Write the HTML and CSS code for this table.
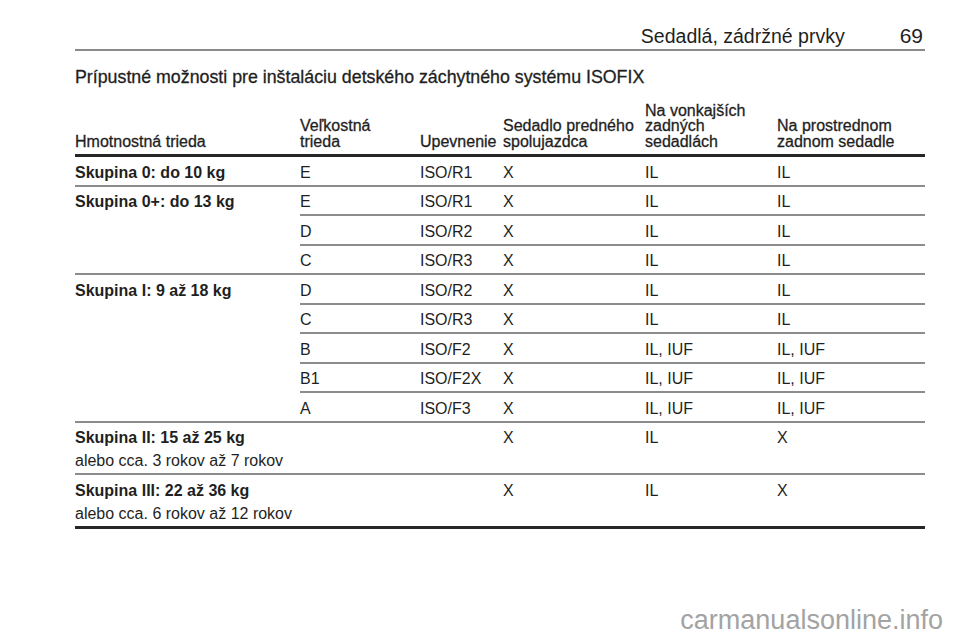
FILE: index.html
```html
<!DOCTYPE html>
<html lang="sk">
<head>
<meta charset="utf-8">
<title>Sedadlá, zádržné prvky</title>
<link rel="stylesheet" href="styles.css">
</head>
<body>
<div class="page">
  <header class="running-head">
    <span class="chapter">Sedadlá, zádržné prvky</span>
    <span class="pageno">69</span>
  </header>
  <h1 class="table-title">Prípustné možnosti pre inštaláciu detského záchytného systému ISOFIX</h1>
  <table class="isofix">
    <colgroup>
      <col class="c1"><col class="c2"><col class="c3"><col class="c4"><col class="c5"><col class="c6">
    </colgroup>
    <thead>
      <tr>
        <th>Hmotnostná trieda</th>
        <th>Veľkostná<br>trieda</th>
        <th>Upevnenie</th>
        <th>Sedadlo predného<br>spolujazdca</th>
        <th>Na vonkajších<br>zadných<br>sedadlách</th>
        <th>Na prostrednom<br>zadnom sedadle</th>
      </tr>
    </thead>
    <tbody>
      <tr>
        <td class="grp">Skupina 0: do 10 kg</td>
        <td>E</td><td>ISO/R1</td><td>X</td><td>IL</td><td>IL</td>
      </tr>
      <tr>
        <td class="grp" rowspan="3">Skupina 0+: do 13 kg</td>
        <td>E</td><td>ISO/R1</td><td>X</td><td>IL</td><td>IL</td>
      </tr>
      <tr><td>D</td><td>ISO/R2</td><td>X</td><td>IL</td><td>IL</td></tr>
      <tr><td>C</td><td>ISO/R3</td><td>X</td><td>IL</td><td>IL</td></tr>
      <tr>
        <td class="grp" rowspan="5">Skupina I: 9 až 18 kg</td>
        <td>D</td><td>ISO/R2</td><td>X</td><td>IL</td><td>IL</td>
      </tr>
      <tr><td>C</td><td>ISO/R3</td><td>X</td><td>IL</td><td>IL</td></tr>
      <tr><td>B</td><td>ISO/F2</td><td>X</td><td>IL, IUF</td><td>IL, IUF</td></tr>
      <tr><td>B1</td><td>ISO/F2X</td><td>X</td><td>IL, IUF</td><td>IL, IUF</td></tr>
      <tr><td>A</td><td>ISO/F3</td><td>X</td><td>IL, IUF</td><td>IL, IUF</td></tr>
      <tr>
        <td class="grp">Skupina II: 15 až 25 kg<span class="age">alebo cca. 3 rokov až 7 rokov</span></td>
        <td></td><td></td><td>X</td><td>IL</td><td>X</td>
      </tr>
      <tr>
        <td class="grp">Skupina III: 22 až 36 kg<span class="age">alebo cca. 6 rokov až 12 rokov</span></td>
        <td></td><td></td><td>X</td><td>IL</td><td>X</td>
      </tr>
    </tbody>
  </table>
  <div class="watermark">carmanualsonline.info</div>
</div>
</body>
</html>
```

FILE: styles.css
```css
html, body {
  margin: 0;
  padding: 0;
  background: #ffffff;
}

.page {
  position: relative;
  box-sizing: border-box;
  width: 960px;
  height: 642px;
  padding: 0 35px 0 75px;
  font-family: "Liberation Sans", Arial, sans-serif;
  color: #1f1f1f;
}

.running-head {
  display: flex;
  justify-content: flex-end;
  align-items: baseline;
  gap: 55px;
  padding: 24px 2px 1px 0;
  line-height: 24px;
  border-bottom: 2px solid #8a8a8a;
}

.chapter {
  font-size: 19.5px;
}

.pageno {
  font-size: 21px;
}

.table-title {
  margin: 15px 0 0;
  font-size: 17.8px;
  line-height: 22px;
  font-weight: normal;
  -webkit-text-stroke: 0.3px #1f1f1f;
}

.isofix {
  margin-top: 14.5px;
  width: 850px;
  table-layout: fixed;
  border-collapse: collapse;
  font-size: 16px;
}

.c1 { width: 225px; }
.c2 { width: 120px; }
.c3 { width: 83px; }
.c4 { width: 142px; }
.c5 { width: 132px; }
.c6 { width: 148px; }

.isofix th {
  text-align: left;
  vertical-align: bottom;
  font-weight: normal;
  line-height: 15.5px;
  padding: 0 0 5px;
  border-bottom: 3px solid #262626;
  -webkit-text-stroke: 0.3px #1f1f1f;
}

.isofix td {
  text-align: left;
  vertical-align: top;
  line-height: 18px;
  padding: 6.5px 0 3px;
  border-bottom: 2px solid #8c8c8c;
}

.isofix td.grp {
  font-weight: bold;
}

.isofix tbody tr:last-child td {
  border-bottom: 3px solid #262626;
}

.age {
  display: block;
  margin-top: 5px;
  font-weight: normal;
}

.watermark {
  position: absolute;
  right: 17px;
  bottom: 7px;
  font-size: 27px;
  line-height: 30px;
  color: #a3a3a3;
}
```
